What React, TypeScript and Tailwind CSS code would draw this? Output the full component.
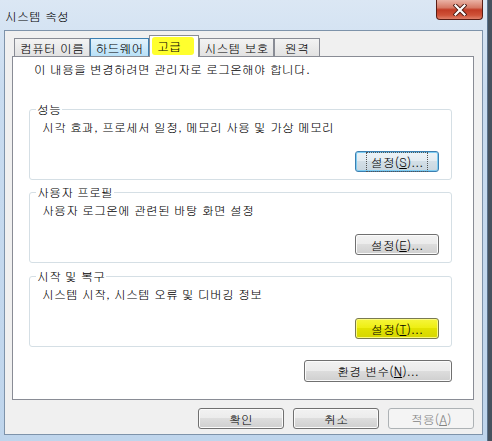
import React from 'react';

const btnBase =
  'h-[21px] rounded-[3px] border flex items-center justify-center text-[12px] leading-[14px]';
const btnNormal =
  'border-[#707070] bg-[linear-gradient(to_bottom,#f2f2f2_0%,#ebebeb_49%,#dddddd_50%,#cfcfcf_100%)] shadow-[inset_0_0_0_1px_#fbfbfb]';
const btnFocus =
  'border-[#3c7fb1] bg-[linear-gradient(to_bottom,#eef4f8_0%,#e2ebf1_49%,#d3dfe7_50%,#c9d6df_100%)] shadow-[inset_0_0_0_1px_#7fcdf2]';
const btnYellow =
  'border-[#7a7a50] bg-[linear-gradient(to_bottom,#f6f63c_0%,#eeee10_49%,#e2e200_50%,#d6d600_100%)] shadow-[inset_0_0_0_1px_#fafa80]';
const btnDisabled = 'border-[#adb2b5] bg-[#f4f4f4] text-[#838383]';

const Mnemonic = ({ label, k, suffix = '' }: { label: string; k: string; suffix?: string }) => (
  <span>
    {label}(<span className="underline underline-offset-[1px]">{k}</span>){suffix}
  </span>
);

const Group = ({
  title,
  text,
  children,
  className = '',
}: {
  title: string;
  text: string;
  children: React.ReactNode;
  className?: string;
}) => (
  <fieldset className={`ml-[16px] w-[423px] border border-[#d5dfe5] rounded-[3px] pb-[7px] ${className}`}>
    <legend className="ml-[6px] px-[1px] leading-[14px]">{title}</legend>
    <p className="pl-[12px] pt-[4px] leading-[14px]">{text}</p>
    <div className="mt-[17px] pr-[12px] flex justify-end">{children}</div>
  </fieldset>
);

const tabs = [
  { label: '컴퓨터 이름', w: 'w-[76px]', kind: 'normal' },
  { label: '하드웨어', w: 'w-[59px]', kind: 'hover' },
  { label: '고급', w: 'w-[50px]', kind: 'selected' },
  { label: '시스템 보호', w: 'w-[75px]', kind: 'normal' },
  { label: '원격', w: 'w-[46px]', kind: 'normal' },
];

export default function App() {
  return (
    <div className="w-[492px] h-[441px] overflow-hidden bg-[#46525e] text-black text-[12px] leading-[14px] font-['Gulim','Noto_Sans_CJK_KR',sans-serif]">
      <div className="w-[488px] h-[441px] flex flex-col border-r border-[#5b738d] bg-[linear-gradient(to_bottom,#dbe7f4_0%,#c9dcf0_20%,#bfd5ec_100%)]">
        {/* Title bar */}
        <div className="h-[30px] flex items-start justify-between shrink-0">
          <span className="pl-[5px] pt-[9px] text-[12px] leading-[14px] text-black">시스템 속성</span>
          <div className="mr-[4px] w-[47px] h-[20px] rounded-b-[4px] border border-t-0 border-[#5a1d14] bg-[linear-gradient(to_bottom,#eab3a6_0%,#d67a66_40%,#c23c25_52%,#cf5238_80%,#e0816a_100%)] flex items-center justify-center">
            <svg width="14" height="12" viewBox="0 0 14 12">
              <path d="M2.5 1.5 L11.5 10.5 M11.5 1.5 L2.5 10.5" stroke="#4a1a12" strokeWidth="4" strokeLinecap="square" />
              <path d="M2.5 1.5 L11.5 10.5 M11.5 1.5 L2.5 10.5" stroke="#ffffff" strokeWidth="2.2" strokeLinecap="square" />
            </svg>
          </div>
        </div>

        {/* Client area */}
        <div className="ml-[4px] w-[479px] h-[405px] border border-[#7e93aa] bg-[#f0f0f0] flex flex-col">
          <div className="ml-[7px] mt-[4px] w-[462px]">
            {/* Tabs */}
            <div className="flex items-end h-[21px] pl-[2px]">
              {tabs.map((t) =>
                t.kind === 'selected' ? (
                  <div
                    key={t.label}
                    className={`${t.w} h-[22px] -mb-[1px] relative z-10 bg-white border border-b-0 border-[#898c95] flex items-start pl-[2px] pt-[1px]`}
                  >
                    <span className="w-[42px] h-[18px] bg-[#ffff2e] rounded-[3px] pl-[5px] pt-[2px] leading-[14px]">
                      {t.label}
                    </span>
                  </div>
                ) : (
                  <div
                    key={t.label}
                    className={`${t.w} h-[18px] border border-b-0 flex items-center justify-center leading-[14px] ${
                      t.kind === 'hover'
                        ? 'border-[#3c7fb1] bg-[linear-gradient(to_bottom,#e3f3fc,#b8e0f7)]'
                        : 'border-[#898c95] bg-[linear-gradient(to_bottom,#f3f3f3,#e2e2e2)]'
                    }`}
                  >
                    {t.label}
                  </div>
                )
              )}
            </div>

            {/* Tab panel */}
            <div className="h-[344px] border border-[#898c95] bg-white flex flex-col">
              <p className="pl-[21px] pt-[5px] leading-[14px]">이 내용을 변경하려면 관리자로 로그온해야 합니다.</p>

              <Group className="mt-[26px]" title="성능" text="시각 효과, 프로세서 일정, 메모리 사용 및 가상 메모리">
                <button className={`${btnBase} ${btnFocus} w-[84px]`}>
                  <span className="outline-1 outline-dotted outline-[#555] outline-offset-[2px] px-[2px]">
                    <Mnemonic label="설정" k="S" suffix="..." />
                  </span>
                </button>
              </Group>

              <Group className="mt-[5px]" title="사용자 프로필" text="사용자 로그온에 관련된 바탕 화면 설정">
                <button className={`${btnBase} ${btnNormal} w-[84px]`}>
                  <Mnemonic label="설정" k="E" suffix="..." />
                </button>
              </Group>

              <Group className="mt-[6px]" title="시작 및 복구" text="시스템 시작, 시스템 오류 및 디버깅 정보">
                <button className={`${btnBase} ${btnYellow} w-[84px]`}>
                  <Mnemonic label="설정" k="T" suffix="..." />
                </button>
              </Group>

              <div className="mt-[13px] ml-[16px] w-[423px] flex justify-end">
                <button className={`${btnBase} ${btnNormal} w-[148px] h-[22px]`}>
                  <Mnemonic label="환경 변수" k="N" suffix="..." />
                </button>
              </div>
            </div>
          </div>

          {/* Dialog buttons */}
          <div className="mt-[8px] pr-[8px] flex justify-end gap-[9px]">
            <button className={`${btnBase} ${btnNormal} w-[86px]`}>확인</button>
            <button className={`${btnBase} ${btnNormal} w-[86px]`}>취소</button>
            <button className={`${btnBase} ${btnDisabled} w-[86px]`}>
              <Mnemonic label="적용" k="A" />
            </button>
          </div>
        </div>
      </div>
    </div>
  );
}
